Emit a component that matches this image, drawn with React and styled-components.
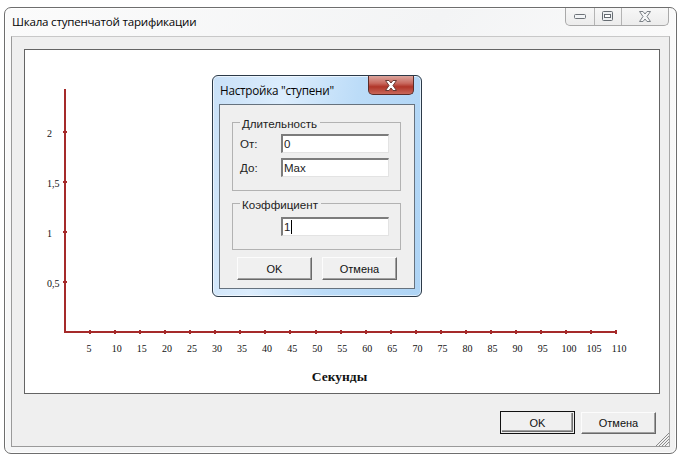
import React from "react";
import styled, { createGlobalStyle } from "styled-components";

const Global = createGlobalStyle`
  html, body { margin: 0; padding: 0; background: #fff; }
  body { width: 682px; height: 461px; overflow: hidden; font-family: "Liberation Sans", Arial, sans-serif; }
`;

const Page = styled.div`
  position: relative;
  width: 682px;
  height: 461px;
  padding: 7px 5px 7px 4px;
  box-sizing: border-box;
`;

const Window = styled.div`
  width: 673px;
  height: 447px;
  box-sizing: border-box;
  border: 1px solid #6e6e6e;
  border-radius: 7px;
  background: linear-gradient(125deg, #fbfbfb 0%, #f3f4f5 45%, #fafafa 70%, #f1f1f1 100%);
  box-shadow: inset 0 0 0 1px rgba(255, 255, 255, 0.85);
  display: flex;
  flex-direction: column;
  padding: 0 6px 6px;
`;

const TitleBar = styled.div`
  height: 28px;
  flex: none;
  display: flex;
  justify-content: space-between;
  align-items: flex-start;
  padding-left: 1px;
`;

const Title = styled.div`
  font-family: "Open Sans", sans-serif;
  font-size: 11.6px;
  line-height: 16px;
  margin-top: 6px;
  color: #050505;
  letter-spacing: -0.02em;
`;

const Controls = styled.div`
  display: flex;
  height: 18px;
  box-sizing: border-box;
  margin-right: 1px;
  border: 1px solid #a9a9a9;
  border-top: none;
  border-radius: 0 0 5px 5px;
  background: linear-gradient(#f7f7f7, #ececec);
`;

const Control = styled.div`
  width: ${(p) => p.$w}px;
  display: flex;
  align-items: center;
  justify-content: center;
  border-left: ${(p) => (p.$divider ? "1px solid #b4b4b4" : "none")};
`;

const Body = styled.div`
  flex: 1;
  min-height: 0;
  box-sizing: border-box;
  border: 1px solid #9a9a9a;
  border-top-color: #c8c8c8;
  border-right-color: #a8a8a8;
  background: #efefef;
  padding: 12px 9px 0 12px;
  display: flex;
  flex-direction: column;
`;

const ChartPanel = styled.div`
  width: 636px;
  height: 345px;
  flex: none;
  box-sizing: border-box;
  border: 1px solid #646464;
  background: #fff;
`;

const Footer = styled.div`
  display: flex;
  justify-content: flex-end;
  gap: 6px;
  padding: 18px 4px 0 0;
`;

const Button = styled.div`
  width: 75px;
  height: ${(p) => p.$h || 22}px;
  box-sizing: border-box;
  display: flex;
  align-items: center;
  justify-content: center;
  font-size: 11px;
  color: #111;
  background: #f0f0f0;
  border-style: solid;
  border-width: 1px;
  border-color: #fcfcfc #696969 #696969 #fcfcfc;
  box-shadow: inset -1px -1px 0 #a0a0a0;
`;

const DefaultButton = styled.div`
  margin-top: -1px;
  padding: 1px;
  border: 1px solid #111;
  width: 75px;
  height: 23px;
  box-sizing: border-box;
  display: flex;
`;

const DefaultFace = styled.div`
  flex: 1;
  display: flex;
  align-items: center;
  justify-content: center;
  font-size: 11px;
  color: #111;
  background: #f0f0f0;
  box-shadow: inset -1px -1px 0 #6f6f6f, inset -2px -2px 0 #a0a0a0;
`;

const Grip = styled.svg`
  position: absolute;
  left: 654px;
  top: 431px;
`;

const Dialog = styled.div`
  position: absolute;
  left: 212px;
  top: 75px;
  width: 210px;
  height: 222px;
  box-sizing: border-box;
  border: 1px solid #2c3a48;
  border-radius: 6px;
  background: linear-gradient(100deg, #c8e0f7 0%, #dcedfd 30%, #bcdcf8 60%, #aed4f5 100%);
  box-shadow: inset 0 0 0 1px rgba(255, 255, 255, 0.6);
  padding: 0 6px 7px;
  display: flex;
  flex-direction: column;
`;

const DialogBar = styled.div`
  height: 28px;
  flex: none;
  display: flex;
  justify-content: space-between;
  align-items: flex-start;
`;

const DialogTitle = styled.div`
  font-family: "Open Sans", sans-serif;
  font-size: 11.7px;
  line-height: 16px;
  margin: 6px 0 0 1px;
  color: #050505;
  letter-spacing: -0.02em;
`;

const CloseButton = styled.div`
  width: 46px;
  height: 19px;
  margin-right: 1px;
  box-sizing: border-box;
  border: 1px solid #5b2c28;
  border-top: none;
  border-radius: 0 0 5px 5px;
  background: linear-gradient(#dca59d 0%, #c96a5f 40%, #b03528 60%, #c9685a 100%);
  display: flex;
  align-items: center;
  justify-content: center;
`;

const DialogBody = styled.div`
  flex: 1;
  min-height: 0;
  box-sizing: border-box;
  border: 1px solid #66727e;
  background: #efefef;
  padding: 17px 13px 0 12px;
  display: flex;
  flex-direction: column;
`;

const Group = styled.div`
  margin-top: ${(p) => p.$mt || 0}px;
  height: ${(p) => p.$h}px;
  flex: none;
  box-sizing: border-box;
  border: 1px solid #b2b2b2;
  position: relative;
  padding-top: ${(p) => p.$pt}px;
`;

const GroupLabel = styled.span`
  position: absolute;
  left: 7px;
  top: -5px;
  font-size: 11.6px;
  line-height: 12px;
  padding: 0 3px 0 2px;
  background: #efefef;
  color: #222;
`;

const Row = styled.div`
  display: flex;
  align-items: center;
  height: 19px;
  margin-top: ${(p) => p.$mt || 0}px;
  padding-left: 7px;
`;

const RowLabel = styled.span`
  width: 41px;
  font-size: 11.6px;
  color: #222;
`;

const Field = styled.div`
  width: 108px;
  height: 19px;
  box-sizing: border-box;
  background: #fff;
  border-style: solid;
  border-width: 2px 1px 1px 2px;
  border-color: #7c7c7c #e3e3e3 #e3e3e3 #7c7c7c;
  font-size: 11.5px;
  line-height: 15px;
  color: #222;
  padding-left: 1px;
  display: flex;
  align-items: center;
`;

const Caret = styled.span`
  width: 1px;
  height: 14px;
  margin-left: 1px;
  background: #000;
`;

const DialogButtons = styled.div`
  display: flex;
  gap: 10px;
  padding: 7px 0 0 5px;
`;

const Xticks = [5,10,15,20,25,30,35,40,45,50,55,60,65,70,75,80,85,90,95,100,105,110];
const Yticks = [["0,5", 50], ["1", 100], ["1,5", 150], ["2", 200]];
const labelOffset = { 1: -1, 2: 1.7, 3: 3 };

function Chart() {
  const ox = 40, oy = 282;
  const step = 25.05;
  const c = "#a52a2a";
  return (
    <svg width="634" height="343" style={{ display: "block" }}>
      <line x1={ox} y1={39} x2={ox} y2={oy + 1} stroke={c} strokeWidth="2" />
      <line x1={ox} y1={oy} x2={591} y2={oy} stroke={c} strokeWidth="2" />
      {Xticks.map((v, i) => {
        const x = ox + step * (i + 1);
        return (
          <g key={v}>
            <rect x={Math.round(x) - 1} y={oy - 2} width="2" height="4" fill={c} />
            <text x={x + labelOffset[String(v).length]} y={oy + 20} fontFamily="Liberation Serif, serif" fontSize="10" fill="#111" textAnchor="middle">{v}</text>
          </g>
        );
      })}
      {Yticks.map(([l, d]) => (
        <g key={l}>
          <rect x={ox - 2} y={oy - d - 1} width="4" height="2" fill={c} />
          <text x={22} y={oy - d + 5} fontFamily="Liberation Serif, serif" fontSize="10" fill="#111">{l}</text>
        </g>
      ))}
      <text x={314.5} y={331} fontFamily="Liberation Serif, serif" fontSize="13.5" fontWeight="bold" fill="#111" textAnchor="middle">Секунды</text>
    </svg>
  );
}

const CloseGlyph = ({ fill, stroke }) => (
  <svg width="14" height="11" viewBox="0 0 14 11">
    <path d="M1.500.500h3.500l2 2.500 2-2.500h3.500L9 5.500l3.500 5H9l-2-2.500-2 2.500H1.500L5 5.500z" fill={fill} stroke={stroke} />
  </svg>
);

export default function App() {
  return (
    <Page>
      <Global />
      <Window>
        <TitleBar>
          <Title>Шкала ступенчатой тарификации</Title>
          <Controls>
            <Control $w={28}>
              <svg width="13" height="6"><rect x="0.5" y="0.5" width="11" height="4" rx="1" fill="#f2f4f6" stroke="#6d7278" /></svg>
            </Control>
            <Control $w={26} $divider>
              <svg width="12" height="11"><rect x="0.5" y="0.5" width="10" height="9" rx="1" fill="#eef0f2" stroke="#666c72" /><rect x="2.5" y="3.5" width="6" height="3" fill="#fff" stroke="#666c72" /></svg>
            </Control>
            <Control $w={46} $divider>
              <CloseGlyph fill="#f5f6f7" stroke="#7a8086" />
            </Control>
          </Controls>
        </TitleBar>
        <Body>
          <ChartPanel><Chart /></ChartPanel>
          <Footer>
            <DefaultButton><DefaultFace>OK</DefaultFace></DefaultButton>
            <Button>Отмена</Button>
          </Footer>
        </Body>
      </Window>
      <Grip width="16" height="16" viewBox="0 0 16 16">
        <path d="M15 2L2 15M15 5L5 15M15 8L8 15M15 11L11 15" stroke="#8a8a8a" strokeWidth="1" fill="none" />
      </Grip>
      <Dialog>
        <DialogBar>
          <DialogTitle>Настройка "ступени"</DialogTitle>
          <CloseButton><CloseGlyph fill="#fff" stroke="#6a3a34" /></CloseButton>
        </DialogBar>
        <DialogBody>
          <Group $h={69} $pt={11}>
            <GroupLabel>Длительность</GroupLabel>
            <Row><RowLabel>От:</RowLabel><Field>0</Field></Row>
            <Row $mt={5}><RowLabel>До:</RowLabel><Field>Max</Field></Row>
          </Group>
          <Group $h={47} $mt={12} $pt={13}>
            <GroupLabel>Коэффициент</GroupLabel>
            <Row><RowLabel /><Field>1<Caret /></Field></Row>
          </Group>
          <DialogButtons>
            <Button $h={23}>OK</Button>
            <Button $h={23}>Отмена</Button>
          </DialogButtons>
        </DialogBody>
      </Dialog>
    </Page>
  );
}
